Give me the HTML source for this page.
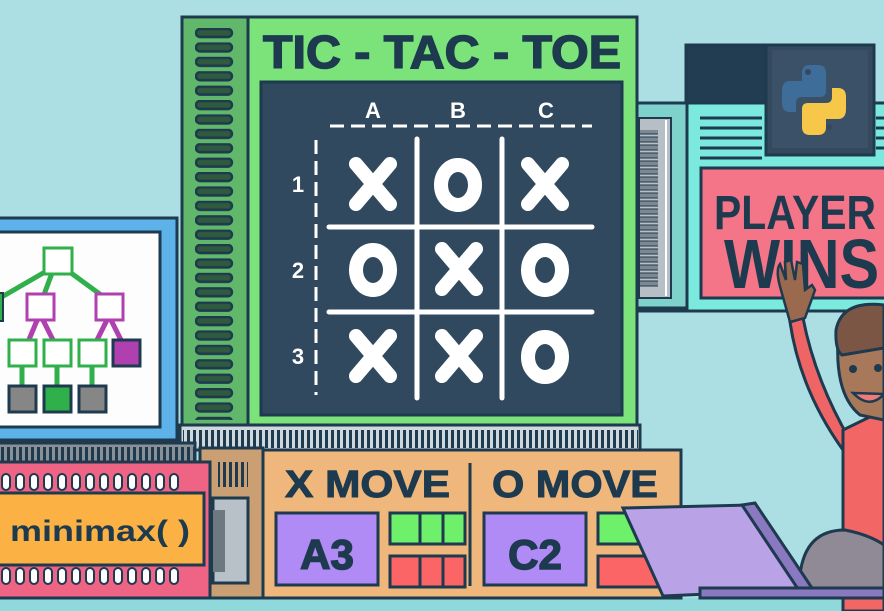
<!DOCTYPE html>
<html><head><meta charset="utf-8"><style>
html,body{margin:0;padding:0;background:#abdfe4;}
svg{display:block}
text{font-family:"Liberation Sans","DejaVu Sans",sans-serif;font-weight:bold;}
</style></head><body>
<svg width="884" height="611" viewBox="0 0 884 611" xmlns="http://www.w3.org/2000/svg">
<defs>
<pattern id="vent" x="195" y="28" width="66" height="14.4" patternUnits="userSpaceOnUse">
<rect x="1" y="1" width="36" height="8" rx="4" fill="#2f5a3e" stroke="#1d3a4f" stroke-width="2.5"/>
</pattern>
<pattern id="tick" width="6" height="30" patternUnits="userSpaceOnUse">
<rect x="1" y="0" width="3" height="30" fill="#1d3a4f"/>
</pattern>
<pattern id="htick" width="30" height="8" patternUnits="userSpaceOnUse">
<rect x="0" y="1" width="30" height="5" fill="#7e8890" stroke="#1d3a4f" stroke-width="1"/>
</pattern>
</defs>
<rect width="884" height="611" fill="#abdfe4"/>
<rect y="598" width="884" height="13" fill="#8fd8dc"/>

<!-- right teal panel -->
<rect x="637" y="103" width="260" height="208" fill="#7ce9df" stroke="#1d3a4f" stroke-width="3"/>
<rect x="637" y="103" width="50" height="205" fill="#7fd1cc" stroke="#1d3a4f" stroke-width="3"/>
<rect x="639" y="118" width="32" height="180" fill="#b7bfc6" stroke="#1d3a4f" stroke-width="2"/>
<rect x="640" y="130" width="18" height="158" fill="url(#htick)"/>
<line x1="666" y1="120" x2="666" y2="296" stroke="#fff" stroke-width="2"/>
<g stroke="#1d3a4f" stroke-width="3"><line x1="700" y1="118" x2="762" y2="118"/><line x1="700" y1="128" x2="762" y2="128"/><line x1="700" y1="138" x2="762" y2="138"/><line x1="700" y1="148" x2="762" y2="148"/><line x1="700" y1="158" x2="762" y2="158"/><line x1="876" y1="118" x2="884" y2="118"/><line x1="876" y1="128" x2="884" y2="128"/><line x1="876" y1="138" x2="884" y2="138"/><line x1="876" y1="148" x2="884" y2="148"/></g>
<rect x="686" y="45" width="80" height="58" fill="#223c52" stroke="#1d3a4f" stroke-width="3"/>
<rect x="766" y="45" width="108" height="110" fill="#34495e" stroke="#1d3a4f" stroke-width="3"/>
<rect x="772" y="50" width="96" height="98" fill="#3b5167"/>
<path d="M810 65 q-8 0 -8 8 v8 h-12 q-8 0 -8 10 v12 q0 9 8 9 h6 v-9 q0 -6 6 -6 h18 q6 0 6 -6 v-18 q0 -8 -8 -8z" fill="#3f6d99"/>
<path d="M818 135 q8 0 8 -8 v-8 h12 q8 0 8 -10 v-12 q0 -9 -8 -9 h-6 v9 q0 6 -6 6 h-18 q-6 0 -6 6 v18 q0 8 8 8z" fill="#f6c748"/>
<circle cx="808" cy="72" r="3" fill="#34495e"/><circle cx="829" cy="127" r="3" fill="#34495e"/>
<!-- sign -->
<rect x="701" y="168" width="190" height="130" fill="#f47488" stroke="#1d3a4f" stroke-width="3"/>
<text x="714" y="229" font-size="48" fill="#1d3a4f" textLength="162" lengthAdjust="spacingAndGlyphs">PLAYER</text>
<text x="724" y="288" font-size="70" fill="#1d3a4f" textLength="175" lengthAdjust="spacingAndGlyphs">WINS!</text>

<!-- green vent panel -->
<rect x="182" y="17" width="66" height="413" fill="#62b86a" stroke="#1d3a4f" stroke-width="3"/>
<rect x="195" y="28" width="40" height="392" fill="url(#vent)"/>
<!-- main green panel -->
<rect x="248" y="17" width="389" height="408" fill="#7be37a" stroke="#1d3a4f" stroke-width="3"/>
<text x="442" y="68" font-size="46" fill="#1d3a4f" stroke="#1d3a4f" stroke-width="1.5" text-anchor="middle" textLength="358" lengthAdjust="spacingAndGlyphs">TIC - TAC - TOE</text>
<rect x="261" y="82" width="361" height="333" fill="#30495f" stroke="#1d3a4f" stroke-width="3"/>
<g fill="#fff" font-size="22" text-anchor="middle">
<text x="373" y="118">A</text><text x="458" y="118">B</text><text x="546" y="118">C</text>
<text x="298" y="192">1</text><text x="298" y="278">2</text><text x="298" y="364">3</text>
</g>
<g stroke="#fff" stroke-width="3" stroke-dasharray="14 7"><line x1="330" y1="126" x2="592" y2="126"/><line x1="316" y1="140" x2="316" y2="395"/></g>
<g stroke="#fff" stroke-width="5" stroke-linecap="round"><line x1="417" y1="139" x2="417" y2="398"/><line x1="502" y1="139" x2="502" y2="398"/><line x1="329" y1="227" x2="592" y2="227"/><line x1="329" y1="312" x2="592" y2="312"/></g>
<g stroke="#fff" stroke-width="14" stroke-linecap="round" fill="none">
<path d="M356 164l34 40M390 164l-34 40"/><path d="M528 164l34 40M562 164l-34 40"/>
<path d="M442 249l34 40M476 249l-34 40"/>
<path d="M356 336l34 40M390 336l-34 40"/><path d="M442 336l34 40M476 336l-34 40"/>
<ellipse cx="458" cy="185" rx="17" ry="20"/>
<ellipse cx="373" cy="270" rx="17" ry="20"/><ellipse cx="545" cy="270" rx="17" ry="20"/>
<ellipse cx="545" cy="357" rx="17" ry="20"/>
</g>
<!-- grill -->
<rect x="180" y="425" width="460" height="25" fill="#cfd8dc" stroke="#1d3a4f" stroke-width="3"/>
<rect x="183" y="430" width="455" height="18" fill="url(#tick)"/>

<!-- blue monitor -->
<rect x="-3" y="218" width="180" height="222" fill="#5db2ea" stroke="#1d3a4f" stroke-width="3"/>
<rect x="-3" y="232" width="163" height="195" fill="#fdfdfd" stroke="#1d3a4f" stroke-width="3"/>
<g stroke="#2fb04a" stroke-width="5"><line x1="57" y1="265" x2="0" y2="298"/><line x1="55" y1="265" x2="42" y2="300"/><line x1="60" y1="265" x2="108" y2="300"/><line x1="22" y1="360" x2="22" y2="390"/><line x1="57" y1="360" x2="57" y2="390"/><line x1="92" y1="360" x2="92" y2="390"/></g>
<g stroke="#b03fb0" stroke-width="5"><line x1="38" y1="318" x2="28" y2="342"/><line x1="42" y1="318" x2="54" y2="342"/><line x1="108" y1="318" x2="96" y2="342"/><line x1="110" y1="318" x2="122" y2="342"/></g>
<rect x="-2" y="293" width="5" height="28" fill="#2fb04a" stroke="#1d3a4f" stroke-width="2"/>
<rect x="44" y="248" width="28" height="26" fill="#fff" stroke="#2fb04a" stroke-width="3"/>
<rect x="27" y="294" width="27" height="26" fill="#fff" stroke="#b03fb0" stroke-width="3"/>
<rect x="96" y="294" width="27" height="26" fill="#fff" stroke="#b03fb0" stroke-width="3"/>
<g fill="#fff" stroke="#2fb04a" stroke-width="3"><rect x="9" y="340" width="27" height="26"/><rect x="44" y="340" width="27" height="26"/><rect x="79" y="340" width="27" height="26"/></g>
<rect x="113" y="340" width="27" height="26" fill="#b03fb0" stroke="#1d3a4f" stroke-width="3"/>
<g stroke="#1d3a4f" stroke-width="3"><rect x="9" y="386" width="27" height="26" fill="#868686"/><rect x="44" y="386" width="27" height="26" fill="#2fb04a"/><rect x="79" y="386" width="27" height="26" fill="#868686"/></g>

<!-- grey strip & pink panel -->
<rect x="-3" y="443" width="198" height="20" fill="#8a9096" stroke="#1d3a4f" stroke-width="3"/>
<rect x="0" y="447" width="195" height="14" fill="url(#tick)"/>
<rect x="200" y="448" width="63" height="150" fill="#c99f73" stroke="#1d3a4f" stroke-width="3"/>
<rect x="213" y="498" width="35" height="85" fill="#b8c0c8" stroke="#1d3a4f" stroke-width="3"/>
<rect x="213" y="510" width="12" height="62" fill="#6e7880"/>
<rect x="218" y="462" width="30" height="25" fill="url(#tick)"/>
<rect x="-3" y="462" width="213" height="136" fill="#ef6384" stroke="#1d3a4f" stroke-width="3"/>
<g fill="#fff" stroke="#1d3a4f" stroke-width="2">
<rect x="2" y="474" width="8" height="16" rx="4"/><rect x="16" y="474" width="8" height="16" rx="4"/><rect x="30" y="474" width="8" height="16" rx="4"/><rect x="44" y="474" width="8" height="16" rx="4"/><rect x="58" y="474" width="8" height="16" rx="4"/><rect x="72" y="474" width="8" height="16" rx="4"/><rect x="86" y="474" width="8" height="16" rx="4"/><rect x="100" y="474" width="8" height="16" rx="4"/><rect x="114" y="474" width="8" height="16" rx="4"/><rect x="128" y="474" width="8" height="16" rx="4"/><rect x="142" y="474" width="8" height="16" rx="4"/><rect x="156" y="474" width="8" height="16" rx="4"/><rect x="170" y="474" width="8" height="16" rx="4"/>
<rect x="2" y="568" width="8" height="16" rx="4"/><rect x="16" y="568" width="8" height="16" rx="4"/><rect x="30" y="568" width="8" height="16" rx="4"/><rect x="44" y="568" width="8" height="16" rx="4"/><rect x="58" y="568" width="8" height="16" rx="4"/><rect x="72" y="568" width="8" height="16" rx="4"/><rect x="86" y="568" width="8" height="16" rx="4"/><rect x="100" y="568" width="8" height="16" rx="4"/><rect x="114" y="568" width="8" height="16" rx="4"/><rect x="128" y="568" width="8" height="16" rx="4"/><rect x="142" y="568" width="8" height="16" rx="4"/><rect x="156" y="568" width="8" height="16" rx="4"/><rect x="170" y="568" width="8" height="16" rx="4"/>
</g>
<rect x="-3" y="493" width="207" height="72" fill="#fbb144" stroke="#1d3a4f" stroke-width="3"/>
<text x="10" y="541" font-size="30" fill="#1d3a4f" textLength="180" lengthAdjust="spacingAndGlyphs">minimax( )</text>

<!-- orange panel -->
<rect x="263" y="450" width="418" height="148" fill="#efb77c" stroke="#1d3a4f" stroke-width="3"/>
<text x="285" y="497" font-size="38" fill="#1d3a4f" stroke="#1d3a4f" stroke-width="1" textLength="165" lengthAdjust="spacingAndGlyphs">X MOVE</text>
<text x="492" y="497" font-size="38" fill="#1d3a4f" stroke="#1d3a4f" stroke-width="1" textLength="166" lengthAdjust="spacingAndGlyphs">O MOVE</text>
<line x1="470" y1="463" x2="470" y2="586" stroke="#1d3a4f" stroke-width="3"/>
<g stroke="#1d3a4f" stroke-width="3">
<rect x="276" y="513" width="102" height="72" fill="#b08af5"/><rect x="484" y="513" width="102" height="72" fill="#b08af5"/>
<rect x="390" y="513" width="75" height="31" fill="#6ef06a"/><rect x="390" y="556" width="75" height="31" fill="#fb6565"/>
<rect x="598" y="513" width="60" height="31" fill="#6ef06a"/><rect x="598" y="556" width="60" height="31" fill="#fb6565"/>
<line x1="420" y1="513" x2="420" y2="544"/><line x1="443" y1="513" x2="443" y2="544"/><line x1="420" y1="556" x2="420" y2="587"/><line x1="443" y1="556" x2="443" y2="587"/>
</g>
<text x="327" y="569" font-size="42" fill="#1d3a4f" stroke="#1d3a4f" stroke-width="1.5" text-anchor="middle">A3</text>
<text x="535" y="569" font-size="42" fill="#1d3a4f" stroke="#1d3a4f" stroke-width="1.5" text-anchor="middle">C2</text>

<!-- person -->
<path d="M790 322 L803 318 Q815 380 850 440 L884 440 L884 611 L843 611 L843 450 Q800 390 790 322Z" fill="#ef6464" stroke="#1d3a4f" stroke-width="3"/>
<path d="M843 430 L884 410 L884 611 L843 611Z" fill="#f26666" stroke="#1d3a4f" stroke-width="3"/>
<path d="M790 322 L781 290 Q775 270 780 264 L786 280 L785 262 L791 260 L795 280 L797 262 L803 264 L805 290 L812 285 L815 290 L805 318Z" fill="#9b6a4e" stroke="#1d3a4f" stroke-width="2.5"/>
<path d="M884 313 Q845 300 838 340 Q835 395 860 415 L884 420Z" fill="#a8785a" stroke="#1d3a4f" stroke-width="3"/>
<path d="M884 305 Q842 300 836 330 Q835 350 842 355 L884 348Z" fill="#7c5644" stroke="#1d3a4f" stroke-width="3"/>
<circle cx="853" cy="369" r="4" fill="#1d3a4f"/><circle cx="878" cy="368" r="4" fill="#1d3a4f"/>
<path d="M853 393 Q870 410 884 394 Z" fill="#f07a7a" stroke="#1d3a4f" stroke-width="2.5"/>
<path d="M800 575 Q805 530 845 530 Q870 535 884 545 L884 588 L805 590Z" fill="#8f8a96" stroke="#1d3a4f" stroke-width="3"/>
<!-- laptop -->
<path d="M623 508 L750 505 L800 590 L663 596Z" fill="#b9a2e6" stroke="#1d3a4f" stroke-width="3"/>
<path d="M742 505 L755 503 L812 588 L800 592Z" fill="#8a78c0" stroke="#1d3a4f" stroke-width="3"/>
<rect x="700" y="588" width="184" height="10" fill="#8a78c0" stroke="#1d3a4f" stroke-width="3"/>
</svg>
</body></html>
